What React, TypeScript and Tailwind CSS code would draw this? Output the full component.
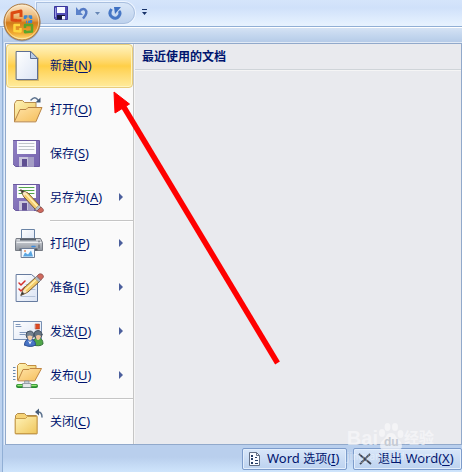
import type { ReactNode } from "react";

const outline = { strokeLinejoin: "round", strokeLinecap: "round" } as const;

function Gradients() {
  return (
    <svg className="absolute h-0 w-0" aria-hidden="true">
      <defs>
        <linearGradient id="folder" x1="0" y1="0" x2="1" y2="1">
          <stop offset="0" stopColor="#fff3b8" />
          <stop offset="1" stopColor="#efc65c" />
        </linearGradient>
        <linearGradient id="flap" x1="0" y1="0" x2="1" y2="1">
          <stop offset="0" stopColor="#ffe2a6" />
          <stop offset="1" stopColor="#f5bf5c" />
        </linearGradient>
        <linearGradient id="paper" x1="0" y1="0" x2="1" y2="1">
          <stop offset="0" stopColor="#ffffff" />
          <stop offset="1" stopColor="#dbe4f4" />
        </linearGradient>
        <linearGradient id="purple" x1="0" y1="0" x2="1" y2="1">
          <stop offset="0" stopColor="#9180c4" />
          <stop offset="1" stopColor="#7462ad" />
        </linearGradient>
        <linearGradient id="metal" x1="0" y1="0" x2="0" y2="1">
          <stop offset="0" stopColor="#d4d7dc" />
          <stop offset="1" stopColor="#90969f" />
        </linearGradient>
        <linearGradient id="orb" x1="0" y1="0" x2="0" y2="1">
          <stop offset="0" stopColor="#fbe9cf" />
          <stop offset="0.3" stopColor="#eebf83" />
          <stop offset="0.46" stopColor="#e39a45" />
          <stop offset="0.52" stopColor="#d27a1a" />
          <stop offset="0.8" stopColor="#f0a62e" />
          <stop offset="1" stopColor="#ffe07a" />
        </linearGradient>
      </defs>
    </svg>
  );
}

function Icon({ children }: { children: ReactNode }) {
  return (
    <svg width="32" height="32" viewBox="0 0 32 32" className="shrink-0" aria-hidden="true" {...outline}>
      {children}
    </svg>
  );
}

function NewIcon() {
  return (
    <Icon>
      <path d="M5 30.500h20.500V8" fill="none" stroke="#a98a45" strokeOpacity=".5" />
      <path d="M3.500 1.500h14l7 7v21h-21Z" fill="url(#paper)" stroke="#5e6f93" />
      <path d="M17.500 1.500v7h7Z" fill="#b8cbe8" stroke="#5e6f93" />
    </Icon>
  );
}

function OpenIcon() {
  return (
    <Icon>
      <path d="M1.500 27V9.500l2-3h6l2 2H23V16" fill="url(#folder)" stroke="#b88c4e" />
      <path d="M1.500 27.500 7 15.500h6l2-2h14L23 27.500Z" fill="url(#flap)" stroke="#b88445" />
      <path d="M18 6q4-4.500 7 0" fill="none" stroke="#5c728e" strokeWidth="1.500" />
      <path d="M27.500 3.500v5H22.500Z" fill="#465c78" />
    </Icon>
  );
}

function Floppy({ lines }: { lines: string }) {
  return (
    <g>
      <path d="M.5 2.500h26v26h-24l-2-2Z" fill="url(#purple)" stroke="#6a599f" />
      <path d="M4 3h19v13H4Z" fill="#fafbfd" />
      <path d="M6 5.500h15M6 8.500h15M6 11.500h15" stroke={lines} />
      <path d="M6 19h15v9.500H6Z" fill="#c9c5dc" />
      <path d="M9 21h5v7.500H9Z" fill="#5e4e91" />
      <path d="M15 19h6v9.500h-6Z" fill="#a49dc5" />
    </g>
  );
}

function SaveIcon() {
  return (
    <Icon>
      <Floppy lines="#bfc5ca" />
    </Icon>
  );
}

function SaveAsIcon() {
  return (
    <Icon>
      <Floppy lines="#52a34b" />
      <path d="m8 8 7 3 12 13-4 4L11 15Z" fill="#f5cd70" stroke="#75572f" />
      <path d="m13 12 12 13" stroke="#fff1b5" strokeWidth="1.500" />
      <path d="m8 8 6 3-3 3Z" fill="#fae6c5" />
      <path d="m8 8 3 1.300L9.500 11Z" fill="#333" stroke="#333" strokeWidth=".5" />
      <path d="m22 27 4-4 2 2-4 4Z" fill="#b8c0c4" stroke="#78736a" strokeWidth=".5" />
      <path d="m24 29 4-4q4 3 1.500 5T24 29Z" fill="#cf6a5e" stroke="#824440" strokeWidth=".7" />
    </Icon>
  );
}

function PrintIcon() {
  return (
    <Icon>
      <path d="M8.500 13V1.500h13V13" fill="url(#paper)" stroke="#6983a5" />
      <path d="M3.500 10.500h24l2 4v8h-27v-8Z" fill="url(#metal)" stroke="#777c85" />
      <path d="M7 10.500h16v2H7Z" fill="#59626e" />
      <path d="M4 14.500h24" stroke="#eceef1" />
      <path d="M6.500 20.500h18v2h-18Z" fill="#50565f" />
      <path d="M19 18.500h3" stroke="#3a8ce0" strokeWidth="1.500" />
      <path d="M26 13v1M26 17v3" stroke="#555b64" />
      <path d="M8.500 20.500h13v9h-13Z" fill="#f4f9ff" stroke="#6d7d97" />
      <path d="m10 28.500 2-4 3 2 3-4 2 6Z" fill="#58a5e2" />
      <circle cx="12" cy="23" r="1" fill="#e48b5c" />
    </Icon>
  );
}

function PrepareIcon() {
  return (
    <Icon>
      <path d="M3.500 2.500h15l6 5v22h-21Z" fill="url(#paper)" stroke="#667b9f" />
      <path d="M13 12.500h9M13 17.500h9M8 24.500h14" stroke="#b4c2d8" />
      <path d="m6 11 2 2 4-4M6 17l2 2 4-4" fill="none" stroke="#d5302b" strokeWidth="1.500" />
      <path d="M8 23 11 16 23 5l4 4-12 11Z" fill="#f5cc69" stroke="#75572f" />
      <path d="M12 18 25 6" stroke="#fff0b0" strokeWidth="1.500" />
      <path d="m8 23 3-6 3 3Z" fill="#fae6c5" />
      <path d="m8 23 1.300-3 1.700 1.500Z" fill="#333" stroke="#333" strokeWidth=".5" />
      <path d="m22 6 2-2 4 4-2 2Z" fill="#b0bbc4" stroke="#6c7680" strokeWidth=".6" />
      <path d="m24 4 2-2q4-1 4.500 3L28 8Z" fill="#cf6a5e" stroke="#824440" strokeWidth=".7" />
    </Icon>
  );
}

function SendIcon() {
  return (
    <Icon>
      <path d="M.5 5.500h28v18H.5Z" fill="url(#paper)" stroke="#7890b3" />
      <path d="M3 8.500h4M3 10.500h5M7 16.500h7M7 18.500h5" stroke="#8098bc" />
      <path d="M22.500 8h4v5h-4Z" fill="#dd4b24" stroke="#a9341b" strokeWidth=".5" />
      <path d="M20 29q-1-7 5-7 5 0 5 6-3 3-10 1" fill="#50a747" stroke="#34733b" />
      <circle cx="25" cy="18.500" r="4" fill="#657381" stroke="#455261" />
      <path d="M23 20q2-2 5 0-1 4-3 4t-2-4" fill="#efc39b" />
      <path d="M11.500 29q0-6 5.500-6t5.500 6q-5 3-11 0" fill="#4774c6" stroke="#2d4e91" />
      <circle cx="17" cy="19" r="4" fill="#74818f" stroke="#455261" />
      <path d="M14.500 20.500q2-2 5 0-.5 4-2.500 4t-2.500-4" fill="#f3cda9" />
      <path d="m15 24.500 2 1.500 2-1.500-2 4Z" fill="#fff" />
    </Icon>
  );
}

function PublishIcon() {
  return (
    <Icon>
      <path
        d="M-.5 7.500h3M-.5 10.500h3M-.5 13.500h3M-.5 16.500h3M-.5 19.500h3"
        stroke="#6888ad"
        strokeLinecap="butt"
      />
      <path d="M4.500 20V5.500l2-2h6l2 2H23V9" fill="url(#folder)" stroke="#c18e41" />
      <path d="m5 20.500 5-11h6l1-1h11.500L22 20.500Z" fill="url(#flap)" stroke="#bf8542" />
      <path d="M12 21h4v4h-4Z" fill="#c9cfd5" stroke="#7c8790" strokeWidth=".7" />
      <path d="M5 26h18" stroke="#268a2d" strokeWidth="4" />
      <path d="M5 25.500h18" stroke="#94e675" strokeWidth="1.500" />
      <path d="M10 23.500h8v4h-8Z" fill="#e5e8ea" stroke="#7c8790" strokeWidth=".7" />
    </Icon>
  );
}

function CloseIcon() {
  return (
    <Icon>
      <path d="M2.500 27.500V9.500l2-2h7l2 2H23q1 0 1 1v17Z" fill="#f6d376" stroke="#b18b4a" />
      <path d="M2.500 12.500h10l2-2h9.500v17H2.500Z" fill="url(#folder)" stroke="#c99d48" />
      <path d="M25 6q4 0 4 5" fill="none" stroke="#5c728e" strokeWidth="1.500" />
      <path d="m22 6 4-3.500v7Z" fill="#465c78" />
    </Icon>
  );
}

type Item = { label: string; accel: string; icon: ReactNode; more?: boolean; selected?: boolean };

const groups: Item[][] = [
  [
    { label: "新建", accel: "N", icon: <NewIcon />, selected: true },
    { label: "打开", accel: "O", icon: <OpenIcon /> },
    { label: "保存", accel: "S", icon: <SaveIcon /> },
    { label: "另存为", accel: "A", icon: <SaveAsIcon />, more: true },
  ],
  [
    { label: "打印", accel: "P", icon: <PrintIcon />, more: true },
    { label: "准备", accel: "E", icon: <PrepareIcon />, more: true },
    { label: "发送", accel: "D", icon: <SendIcon />, more: true },
    { label: "发布", accel: "U", icon: <PublishIcon />, more: true },
  ],
  [{ label: "关闭", accel: "C", icon: <CloseIcon /> }],
];

function Accel({ letter }: { letter: string }) {
  return (
    <span className="text-[13px]">
      (<span className="underline underline-offset-2">{letter}</span>)
    </span>
  );
}

function MenuItem({ item }: { item: Item }) {
  return (
    <button
      type="button"
      className={
        item.selected
          ? "flex h-11 w-full items-center rounded-sm border border-[#e8cc7b] bg-linear-to-b from-[#fff3bd] from-0% via-[#ffcf47] via-50% to-[#ffeb9b] to-100% pr-2 pl-1.5 text-left inset-ring-1 inset-ring-[#fff4bd]"
          : "flex h-11 w-full items-center pr-2 pl-[7px] text-left"
      }
    >
      {item.icon}
      <span className="ml-[5px] flex-1 pb-0.5 leading-4 whitespace-nowrap">
        {item.label}
        <Accel letter={item.accel} />
      </span>
      {item.more && (
        <svg width="4" height="8" viewBox="0 0 4 8" className="mr-0.5 mb-0.5" aria-hidden="true">
          <path d="M0 0 4 4 0 8Z" fill="#4b5f9c" />
        </svg>
      )}
    </button>
  );
}

function QuickAccess() {
  return (
    <div className="flex h-[22px] items-center rounded-r-full border border-[#a9bfdf] bg-linear-to-b from-[#dae7f8] to-[#bed2ed] pr-3 pl-4 shadow-[0_0_0_1px_#eef5ff]">
      <button type="button" aria-label="保存">
        <svg width="16" height="16" viewBox="0 0 16 16">
          <path d="M1.500 1.500h13v13h-12l-1-1Z" fill="#5550b8" stroke="#39369b" />
          <path d="M4 2h8v6H4Z" fill="#f7f9ff" />
          <path d="M4 10h8v4.500H4Z" fill="#17183e" />
          <path d="M9 11h3v3.500H9Z" fill="#f1f3ff" />
          <path d="M2.500 3v9" stroke="#9b9be4" />
        </svg>
      </button>
      <button type="button" aria-label="撤消" className="ml-1.5 flex items-center gap-1.5">
        <svg width="14" height="16" viewBox="0 0 14 16">
          <path d="M4 7q3-4 6-2.500 3.500 3-2 9" fill="none" stroke="#5479c4" strokeWidth="2.500" />
          <path d="M1 2v8h7Z" fill="#5c82ca" />
        </svg>
        <svg width="5" height="3" viewBox="0 0 5 3">
          <path d="M0 0h5L2.500 3Z" fill="#6686b5" />
        </svg>
      </button>
      <button type="button" aria-label="重复" className="ml-2">
        <svg width="14" height="16" viewBox="0 0 14 16">
          <path d="M3.500 4Q0 9 4 12t7-1q2-3 0-5" fill="none" stroke="#4777c5" strokeWidth="3" />
          <path d="M6 2h7L7 9Z" fill="#3e70c2" />
        </svg>
      </button>
    </div>
  );
}

function OfficeOrb() {
  return (
    <button type="button" aria-label="Office" className="absolute top-0.5 left-0.5 z-10">
      <svg width="40" height="40" viewBox="0 0 40 40">
        <circle cx="20" cy="21" r="18.500" fill="#5f6f92" opacity=".5" />
        <circle cx="20" cy="20" r="18" fill="url(#orb)" stroke="#a9773f" />
        <circle cx="20" cy="20" r="16.700" fill="none" stroke="#fff2cf" strokeOpacity=".6" />
        <g fill="none" strokeLinejoin="round">
          <path d="m15 18.500-5-.5v-7l9-2v6" stroke="#dc4a12" strokeWidth="3" />
          <path d="M15 18.500h4.500" stroke="#dc4a12" strokeWidth="2.500" />
          <path d="M23 17v-2.500h6V20h-5" stroke="#3b85cf" strokeWidth="2.500" strokeDasharray="5 1" />
          <path d="M18 23h-5.500v6l6 .5V26" stroke="#ffd63f" strokeWidth="2.500" />
          <path d="M23 26v-3h7v6.500l-7 .7V28" stroke="#5aa52c" strokeWidth="2.500" />
        </g>
      </svg>
    </button>
  );
}

function Arrow() {
  return (
    <svg
      width="170"
      height="280"
      viewBox="0 0 170 280"
      className="pointer-events-none absolute top-[91px] left-[112px] z-10"
      aria-hidden="true"
    >
      <path d="M10 13 165.500 272" stroke="#f00" strokeWidth="5.500" />
      <path d="M2 1 3 22 17.500 13Z" fill="#f00" stroke="#f00" />
    </svg>
  );
}

function Watermark() {
  return (
    <div className="pointer-events-none absolute right-7 bottom-2.5 z-10 text-[#f8f8fa]/70">
      <div className="flex items-end font-['Liberation_Sans','Noto_Sans_CJK_SC',sans-serif]">
        <span className="text-xl leading-6 font-bold">Bai</span>
        <span className="relative">
          <svg width="26" height="28" viewBox="0 0 26 28" fill="currentColor" aria-hidden="true">
            <ellipse cx="4" cy="11" rx="3" ry="4" />
            <ellipse cx="9.500" cy="5" rx="3" ry="4" />
            <ellipse cx="17" cy="5" rx="3" ry="4" />
            <ellipse cx="22.500" cy="12" rx="3" ry="4" />
            <path d="M13 11q4 0 5 4l5 5q3 7-3 8H6q-6-1-3-8l5-5q1-4 5-4" />
          </svg>
          <span className="absolute bottom-0 left-1.5 text-xs leading-4 font-bold text-[#c5cad2]">du</span>
        </span>
        <span className="text-[15px] leading-6 font-bold">经验</span>
      </div>
      <div className="text-[10px] leading-3 text-white/40">jingyan.baidu.com</div>
    </div>
  );
}

const footerButton =
  "flex h-[22px] items-center rounded-xs border border-[#7d9ccb] bg-linear-to-b from-[#d9e7f9] to-[#bcd2ef] whitespace-nowrap leading-4 inset-ring-1 inset-ring-[#e3eefc]";

export default function App() {
  return (
    <div className="relative flex min-h-screen flex-col bg-[#bcd2ef] font-['Noto_Sans','Noto_Sans_CJK_SC',sans-serif] text-xs text-[#00156e]">
      <Gradients />
      <OfficeOrb />

      <header className="flex h-[27px] items-start border-b border-[#91afd5] bg-linear-to-b from-[#d5e5fb] from-0% via-[#d0e1fa] via-30% to-[#e8f3ff] to-100% pt-0.5 pl-9">
        <QuickAccess />
        <button type="button" aria-label="自定义快速访问工具栏" className="mt-[7px] ml-[7px]">
          <svg width="5" height="6" viewBox="0 0 5 6" className="block">
            <path d="M0 0h5v1H0ZM0 3h5L2.500 6Z" fill="#17336a" />
          </svg>
        </button>
      </header>

      <div className="ml-0.5 flex flex-1 flex-col border-t border-l border-[#91afd5] border-t-white">
        <div className="h-[15px] bg-linear-to-b from-[#d4e2f4] via-[#c3d6ee] to-[#b4cae7]" />
        <main className="ml-0.5 flex border border-[#91a9cb] outline outline-white/60">
          <nav className="w-[128px] shrink-0 border-r border-[#c5c5c5] bg-[#fafafa]">
            {groups.map((items, index) => (
              <div key={items[0].label}>
                {index > 0 && <div className="ml-11 h-0.5 border-t border-[#c5c5c5] bg-white" />}
                {items.map((item) => (
                  <MenuItem key={item.label} item={item} />
                ))}
              </div>
            ))}
          </nav>
          <section className="flex-1 border-l border-[#f5f5f5] bg-[#e9eaee]">
            <h2 className="h-[26px] border-b border-[#cfd4d8] px-[7px] pt-[5px] leading-4 font-bold shadow-[0_1px_0_#f5f5f5]">
              最近使用的文档
            </h2>
          </section>
        </main>
        <footer className="flex flex-1 items-center justify-end gap-1.5 bg-linear-to-b from-[#b9cfed] from-45% to-[#cfe5fc] to-100%">
          <button type="button" className={`${footerButton} w-[105px] pl-1`}>
            <svg width="14" height="16" viewBox="0 0 14 16" className="mr-1.5" aria-hidden="true">
              <path d="M2.500 1.500h7l3 3v10h-10Z" fill="#f8faff" stroke="#637087" />
              <path d="M9.500 1.500v3h3" fill="none" stroke="#637087" />
              <path d="M4 4h2v2H4ZM4 7h2v2H4ZM4 11h2v2H4Z" fill="#253d67" />
              <path d="M8 6.500h2M8 9.500h3M8 12.500h3" stroke="#253d67" />
            </svg>
            <span>
              <span className="text-[13px]">Word </span>
              选项
              <Accel letter="I" />
            </span>
          </button>
          <button type="button" className={`${footerButton} w-[109px] pl-1`}>
            <svg width="14" height="14" viewBox="0 0 14 14" className="mr-1.5" aria-hidden="true">
              <path d="M1 2 13 12M12 2 2 12" fill="none" stroke="#3d4453" strokeWidth="1.800" />
            </svg>
            <span>
              退出<span className="text-[13px]"> Word</span>
              <Accel letter="X" />
            </span>
          </button>
        </footer>
      </div>

      <Arrow />
      <Watermark />
    </div>
  );
}
